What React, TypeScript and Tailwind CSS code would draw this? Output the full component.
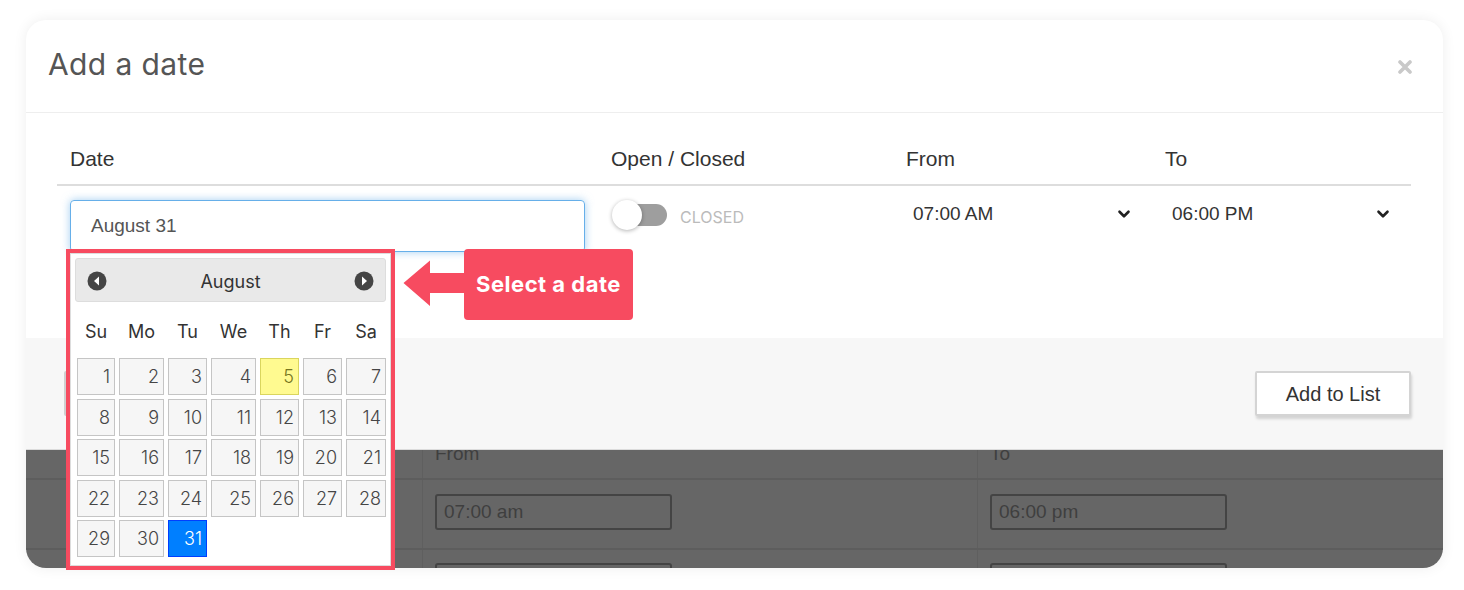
import { ChevronDown } from 'lucide-react';

const weeks: number[][] = [
  [1, 2, 3, 4, 5, 6, 7],
  [8, 9, 10, 11, 12, 13, 14],
  [15, 16, 17, 18, 19, 20, 21],
  [22, 23, 24, 25, 26, 27, 28],
  [29, 30, 31],
];

const dayNames = ['Su', 'Mo', 'Tu', 'We', 'Th', 'Fr', 'Sa'];

function NavIcon({ dir }: { dir: 'prev' | 'next' }) {
  return (
    <svg width="20" height="20" viewBox="0 0 20 20">
      <circle cx="10" cy="10" r="9.5" fill="#454545" />
      {dir === 'prev' ? (
        <path d="M7 10 L12 5.5 L12 14.5 Z" fill="#fff" />
      ) : (
        <path d="M13 10 L8 5.5 L8 14.5 Z" fill="#fff" />
      )}
    </svg>
  );
}

function DayCell({ day }: { day: number }) {
  const isToday = day === 5;
  const isActive = day === 31;
  return (
    <div
      className={`h-[37px] border flex items-center justify-end pr-[4px] text-[18px] ${
        isActive
          ? 'bg-[#007fff] border-[#003eff] text-white'
          : isToday
            ? 'bg-[#fffa90] border-[#dad55e] text-[#777620]'
            : 'bg-[#f6f6f6] border-[#c5c5c5] text-[#454545]'
      }`}
    >
      {day}
    </div>
  );
}

function Calendar() {
  return (
    <div className="absolute left-[66px] top-[249px] w-[329px] h-[321px] border-4 border-[#f74b60] z-30">
      <div className="w-full h-full bg-white border border-[#dddddd] p-[4px] font-['Inter',sans-serif] font-light">
        {/* Header */}
        <div className="h-[44px] bg-[#e9e9e9] border border-[#dddddd] rounded-[3px] flex items-center justify-between px-[11px] pt-[2px]">
          <NavIcon dir="prev" />
          <span className="text-[18px] text-[#333] font-normal">August</span>
          <NavIcon dir="next" />
        </div>

        <div className="px-[2px]">
          <div className="grid grid-cols-[38px_45px_39px_45px_39px_39px_40px] gap-x-[4px] h-[56px] items-center pt-[2px]">
            {dayNames.map((d) => (
              <span key={d} className="text-center text-[18px] font-normal text-[#333]">
                {d}
              </span>
            ))}
          </div>
          <div className="grid grid-cols-[38px_45px_39px_45px_39px_39px_40px] gap-x-[4px] gap-y-[3.5px]">
            {weeks.flat().map((d) => (
              <DayCell key={d} day={d} />
            ))}
          </div>
        </div>
      </div>
    </div>
  );
}

function Callout() {
  return (
    <div className="absolute left-[403px] top-[249px] flex items-start z-30">
      <svg width="61" height="47" viewBox="0 0 61 47" className="mt-[11px]">
        <path d="M0.5 23 L27 0.5 L27 13 L61 13 L61 33 L27 33 L27 46 Z" fill="#f74b60" />
      </svg>
      <div className="w-[169px] h-[71px] bg-[#f74b60] rounded-[4px] flex items-center justify-center">
        <span className="text-white text-[22px] font-bold font-['Inter',sans-serif] tracking-[0.5px]">
          Select a date
        </span>
      </div>
    </div>
  );
}

export default function App() {
  return (
    <div className="relative w-[1464px] h-[590px] bg-white overflow-hidden">
      <div className="ml-[26px] mt-[20px] w-[1417px] h-[548px] rounded-[20px] overflow-hidden flex flex-col bg-white shadow-[0_0_14px_rgba(0,0,0,0.07)]">
        {/* Header */}
        <div className="h-[93px] shrink-0 border-b border-[#eeeeee] flex items-center justify-between pl-[22px] pr-[31px] pb-[3px]">
          <h2 className="text-[30px] text-[#555] font-['Inter',sans-serif] tracking-[0.4px]">Add a date</h2>
          <svg width="14" height="14" viewBox="0 0 14 14" className="mt-[4px]">
            <path d="M2 2 L12 12 M12 2 L2 12" stroke="#c9c9c9" strokeWidth="3.6" strokeLinecap="round" />
          </svg>
        </div>

        {/* Body */}
        <div className="h-[225px] shrink-0 pl-[31px] pr-[32px] pt-[20px] font-['Liberation_Sans',Arial,sans-serif]">
          <div className="grid grid-cols-[541px_295px_259px_259px] h-[53px] items-center border-b-2 border-[#dddddd] text-[21px] text-[#333]">
            <span className="pl-[13px]">Date</span>
            <span className="pl-[13px]">Open / Closed</span>
            <span className="pl-[13px]">From</span>
            <span className="pl-[13px]">To</span>
          </div>
          <div className="grid grid-cols-[541px_295px_259px_259px] pt-[14px]">
            <div className="px-[13px]">
              <div className="h-[52px] border border-[#66afe9] rounded-[4px] shadow-[0_0_8px_rgba(102,175,233,0.6)] flex items-center pl-[20px] text-[19px] text-[#555]">
                August 31
              </div>
            </div>
            <div className="pl-[14px] flex items-start">
              <div className="relative w-[55px] h-[30px] flex items-center">
                <div className="ml-[8px] w-[47px] h-[22px] rounded-full bg-[#9e9e9e]" />
                <div className="absolute left-0 top-0 w-[30px] h-[30px] rounded-full bg-white shadow-[0_1px_4px_rgba(0,0,0,0.3)]" />
              </div>
              <span className="ml-[13px] mt-[5px] text-[16px] text-[#bbbbbb] font-['Inter',sans-serif]">CLOSED</span>
            </div>
            <div className="pl-[20px] pr-[19px] h-[28px] flex items-center justify-between text-[19px] text-[#333]">
              <span>07:00 AM</span>
              <ChevronDown size={18} strokeWidth={3.5} color="#222" />
            </div>
            <div className="pl-[20px] pr-[19px] h-[28px] flex items-center justify-between text-[19px] text-[#333]">
              <span>06:00 PM</span>
              <ChevronDown size={18} strokeWidth={3.5} color="#222" />
            </div>
          </div>
        </div>

        {/* Footer */}
        <div className="relative z-10 h-[112px] shrink-0 bg-[#f7f7f7] border-b border-[#dcdcdc] flex items-center justify-between pl-[38px] pr-[32px] font-['Liberation_Sans',Arial,sans-serif]">
          <button className="w-[120px] h-[45px] bg-white border-2 border-[#d0d0d0] rounded-[2px]" />
          <button className="w-[156px] h-[45px] bg-white border-2 border-[#d4d4d4] rounded-[2px] shadow-[1px_3px_3px_rgba(0,0,0,0.15)] text-[20px] text-[#333]">
            Add to List
          </button>
        </div>

        {/* Page behind the overlay */}
        <div className="flex-1 bg-[#666666] font-['Liberation_Sans',Arial,sans-serif] text-[19px] text-[#3f3f3f]">
          <div className="grid grid-cols-[396px_555px_466px] h-[30px] border-b-2 border-[#5d5d5d]">
            <div />
            <div className="border-l border-[#5f5f5f] pl-[12px] leading-[20px] -mt-[6px]">From</div>
            <div className="border-l border-[#5f5f5f] pl-[12px] leading-[20px] -mt-[6px]">To</div>
          </div>
          <div className="grid grid-cols-[396px_555px_466px] h-[70px] border-b-2 border-[#5d5d5d]">
            <div />
            <div className="border-l border-[#5f5f5f] pl-[12px] pt-[14px]">
              <div className="w-[237px] h-[36px] border-2 border-[#444] rounded-[3px] flex items-center pl-[7px]">07:00 am</div>
            </div>
            <div className="border-l border-[#5f5f5f] pl-[12px] pt-[14px]">
              <div className="w-[237px] h-[36px] border-2 border-[#444] rounded-[3px] flex items-center pl-[7px]">06:00 pm</div>
            </div>
          </div>
          <div className="grid grid-cols-[396px_555px_466px] h-[30px]">
            <div />
            <div className="border-l border-[#5f5f5f] pl-[12px] pt-[13px]">
              <div className="w-[237px] h-[36px] border-2 border-[#444] rounded-[3px]" />
            </div>
            <div className="border-l border-[#5f5f5f] pl-[12px] pt-[13px]">
              <div className="w-[237px] h-[36px] border-2 border-[#444] rounded-[3px]" />
            </div>
          </div>
        </div>
      </div>

      <Calendar />
      <Callout />
    </div>
  );
}
